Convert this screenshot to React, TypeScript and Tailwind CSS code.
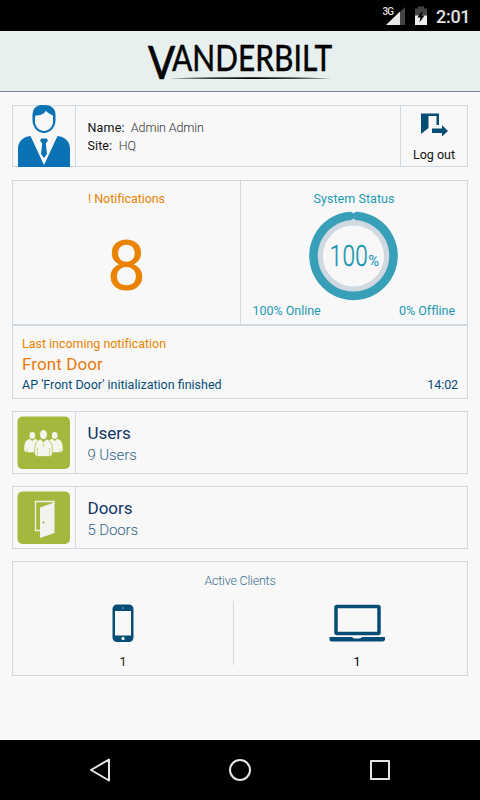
import React from "react";

const line = "border-[#d0d9e2]";

function Header() {
  return (
    <header className="flex h-[61px] justify-center border-b border-[#7683a0] bg-[#e8f0ef]">
      <svg className="overflow-visible" width="220" height="60" viewBox="130 31 220 60" fontFamily="Lato, sans-serif" fill="#050505">
        <text transform="translate(148 78.5) scale(.85 1)" fontSize="47" fontWeight="500" stroke="#050505" strokeWidth="0.6">V</text>
        <text transform="translate(172 71.2) scale(.82 1)" fontSize="36.5" fontWeight="500" stroke="#050505" strokeWidth="0.3" textLength="195.5">ANDERBILT</text>
        <path d="M169 78.2Q250 76.200 332 78.2Q250 79.8 169 78.2Z" />
      </svg>
    </header>
  );
}

function StatusBar() {
  return (
    <div className="flex h-[31px] items-start bg-black">
      <svg className="ml-[380px] shrink-0" width="52" height="31" viewBox="380 0 52 31">
        <text x="382.5" y="14.5" fill="#ddd" fontSize="10" fontWeight="500" fontFamily="Roboto, sans-serif" textLength="11.5">3G</text>
        <path d="M405 7V25H386Z" fill="#444" />
        <path d="M400 11.5V25H386Z" fill="#e8e8e8" />
        <path d="M415 8.5H418V6.5H424V8.5H427V16H415Z" fill="#444" />
        <path d="M415 15.5H427V25H415Z" fill="#eee" />
        <path d="M422.5 10.5L417.5 17.5H420.5L419.5 22.5L424.5 15.5H421.5Z" fill="#000" />
      </svg>
      <span className="mt-[5px] ml-[4px] text-[18px] leading-[24px] font-medium tracking-[-0.3px] text-[#e0e0e0]">2:01</span>
    </div>
  );
}

function Person() {
  return (
    <svg width="62" height="62" viewBox="13 105 62 62" fill="#0a72b5">
      <path d="M44 105C36 104.500 32 109 32.500 117V121C33 128 38 133 44 133S55 128 55.500 121V115C55.500 108 51 105 44 105Z" />
      <path d="M35 118C35 115 37 115.500 40 115C43 114.500 45 112.500 46 110.500C47 113.500 52 114 53 116V122C53 127 48 131 44 131S35 127 35 122Z" fill="#f8f8f8" />
      <path d="M18 167V149C18 141 23 137 30.500 136L44 165L57.500 136C65 137 70 141 70 149V167Z" />
      <path d="M41.300 138.500H46.700L48 140.500L45.800 143.500L47 154L44 158L41 154L42.200 143.500L40 140.500Z" />
    </svg>
  );
}

function Profile() {
  return (
    <section className={`flex h-[62px] border ${line}`}>
      <div className={`w-[63px] shrink-0 border-r ${line}`}>
        <div className="-mt-px flex"><Person /></div>
      </div>
      <div className="flex-1 pt-[13px] pl-[11.5px] text-[12.5px] leading-[18px] text-[#111]">
        <p><span className="tracking-[0.2px]">Name:</span><span className="ml-[6px] font-light tracking-[-0.1px] text-[#333]">Admin Admin</span></p>
        <p><span className="tracking-[0.1px]">Site:</span><span className="ml-[6.5px] font-light tracking-[-0.15px] text-[#333]">HQ</span></p>
      </div>
      <div className={`flex w-[67px] flex-col items-center border-l ${line}`}>
        <svg className="mt-[7px]" width="28" height="24" viewBox="420 113 28 24" fill="#064d76">
          <path d="M421 113.500H439V125H436.500V116H428.500V128L421 134Z" />
          <path d="M432 128.500H442V125L448 131L442 136.500V133H432Z" />
        </svg>
        <span className="mt-[9px] text-[12.5px] leading-[18px] text-[#111]">Log out</span>
      </div>
    </section>
  );
}

function Dashboard() {
  return (
    <section className={`mt-[13px] h-[219px] border ${line}`}>
      <div className={`flex h-[145px] border-b-2 ${line}`}>
        <div className={`flex w-[228px] flex-col items-center border-r ${line} text-[#e98300]`}>
          <h2 className="mt-[9px] text-[12.5px] leading-[18px] tracking-[-0.06px]">! Notifications</h2>
          <strong className="mt-[18px] text-[70px] leading-[80px] font-normal">8</strong>
        </div>
        <div className="flex flex-1 flex-col text-[#2298b3]">
          <h2 className="mt-[9px] text-center text-[12.5px] leading-[18px] tracking-[0.05px]">System Status</h2>
          <svg className="mx-auto mt-[2px]" width="92" height="92" viewBox="308 210 92 92" fontFamily="Roboto, sans-serif">
            <circle cx="353.500" cy="256" r="33.500" fill="none" stroke="#d0d9e1" strokeWidth="6" />
            <path d="M357 216A40 40 0 1 1 350 216" fill="none" stroke="#389fb8" strokeWidth="8.600" strokeLinecap="round" />
            <text transform="translate(329.5 266) scale(.752 1)" fontSize="30" fontWeight="300" fill="#1595b0" stroke="#1595b0" strokeWidth=".4" textLength="51">100</text>
            <text transform="translate(368.500 266) scale(1.08 1)" fontSize="14" fontWeight="300" fill="#1595b0" stroke="#1595b0" strokeWidth=".3" textLength="9.700" lengthAdjust="spacingAndGlyphs">%</text>
          </svg>
          <div className="flex justify-between pr-[12px] pl-[11.5px] text-[12.5px] leading-[18px] tracking-[-0.02px]"><span>100% Online</span><span>0% Offline</span></div>
        </div>
      </div>
      <div className="px-[9px] pt-[9px] text-[12.5px] leading-[18px]">
        <p className="tracking-[-0.03px] text-[#e98300]">Last incoming notification</p>
        <p className="text-[17px] leading-[23px] tracking-[0.1px] text-[#e9780c]">Front Door</p>
        <p className="flex justify-between text-[#064d76]"><span>AP 'Front Door' initialization finished</span><span className="tracking-[-0.1px]">14:02</span></p>
      </div>
    </section>
  );
}

function PersonShape() {
  return (
    <>
      <ellipse cx="0" cy="4.500" rx="3.200" ry="4.500" />
      <path d="M-3 9L0 12L3 9C8 11 9 15 9 24L7 26.500H-7L-9 24C-9 15-8 11-3 9Z" />
    </>
  );
}

function UsersIcon() {
  return (
    <svg width="53" height="53" viewBox="17 416 53 53" fill="#f4f5ec">
      <rect x="17.5" y="416.500" width="52.500" height="52.500" rx="5" fill="#a3b83c" />
      <g transform="translate(32.300 432) scale(.9 .76)"><PersonShape /></g>
      <g transform="translate(54.700 432) scale(.9 .76)"><PersonShape /></g>
      <g transform="translate(43.500 430)" stroke="#a3b83c" strokeWidth=".7"><PersonShape /></g>
      <ellipse cx="43.500" cy="434.400" rx="3.300" ry="4.500" />
      <path d="M43.500 442L42.700 444L43.500 449L44.300 444Z" fill="#d3dba7" />
      <path d="M37.500 448V456M49.500 448V456M27 449V456M60 449V456" stroke="#a3b83c" strokeWidth=".5" />
    </svg>
  );
}

function DoorsIcon() {
  return (
    <svg width="53" height="53" viewBox="17 491 53 53" fill="#f2f3ef">
      <rect x="17.5" y="491.500" width="52.500" height="52.500" rx="5" fill="#a3b83c" />
      <path d="M40.500 530.500H35.500V501.500H54V504" fill="none" stroke="#f2f3ef" strokeWidth="1.300" />
      <path d="M40 507.500L54.500 502.500V533L40 538Z" />
      <circle cx="43.500" cy="522.500" r=".9" fill="#8d9f3a" />
    </svg>
  );
}

function LinkCard({ icon, title, count }: { icon: React.ReactNode; title: string; count: string }) {
  return (
    <section className={`flex h-[63px] border ${line}`}>
      <div className={`w-[63px] border-r ${line} pt-[4px] pl-[4px]`}>{icon}</div>
      <div className="pt-[10px] pl-[11.5px]">
        <h2 className="text-[17px] leading-[22px] text-[#103668]">{title}</h2>
        <p className="text-[15px] leading-[22px] font-light tracking-[-0.1px] text-[#2f6686]">{count}</p>
      </div>
    </section>
  );
}

function Clients() {
  return (
    <section className={`mt-[12px] h-[115px] border ${line}`}>
      <h2 className="pt-[10px] text-center text-[12.5px] leading-[18px] font-light tracking-[-0.2px] text-[#386f8a]">Active Clients</h2>
      <div className="mt-[11px] flex h-[64px] text-[12.5px] leading-[18px] text-[#222]">
        <div className={`flex w-[221px] flex-col items-center border-r ${line}`}>
          <svg className="mt-[3px] shrink-0" width="22" height="38" viewBox="112 604 22 38">
            <rect x="112.500" y="604.500" width="21" height="37.500" rx="4.500" fill="#064d76" />
            <rect x="115" y="611" width="16" height="24.500" fill="#f8f8f8" />
            <circle cx="123" cy="608" r=".8" fill="#a0bbca" />
            <rect x="121.500" y="637" width="3" height="3" rx="1" fill="#f8f8f8" />
          </svg>
          <span className="mt-[11px]">1</span>
        </div>
        <div className="flex flex-1 flex-col items-center pl-[13px] text-black">
          <svg className="mt-[3px] shrink-0" width="56" height="38" viewBox="329 604 56 38" fill="#064d76">
            <rect x="336" y="606.500" width="43" height="27" fill="none" stroke="#064d76" strokeWidth="3.500" rx="1" />
            <path d="M329.500 637H352Q353 638.500 357 638.500T362 637H385V640Q384 641.500 382 641.500H332Q330 641.500 329.500 640Z" />
          </svg>
          <span className="mt-[11px]">1</span>
        </div>
      </div>
    </section>
  );
}

function NavBar() {
  return (
    <nav className="flex h-[60px] items-center justify-center gap-[116px] bg-black">
      <svg width="24" height="24" fill="none" stroke="#e5e5e5" strokeWidth="2" strokeLinejoin="round"><path d="M21 1.500V22.500L3 12Z" /></svg>
      <svg width="24" height="24" fill="none" stroke="#e5e5e5" strokeWidth="2"><circle cx="12" cy="12" r="10" /></svg>
      <svg width="24" height="24" fill="none" stroke="#e5e5e5" strokeWidth="2" strokeLinejoin="round"><rect x="3" y="3" width="18" height="18" /></svg>
    </nav>
  );
}

export default function App() {
  return (
    <div className="flex h-[800px] w-[480px] flex-col overflow-hidden bg-[#f8f8f8] font-['Roboto',sans-serif]">
      <StatusBar />
      <Header />
      <main className="flex-1 pt-[13px] pr-[12px] pl-[12px]">
        <Profile />
        <Dashboard />
        <div className="mt-[12px] flex flex-col gap-[12px]">
          <LinkCard icon={<UsersIcon />} title="Users" count="9 Users" />
          <LinkCard icon={<DoorsIcon />} title="Doors" count="5 Doors" />
        </div>
        <Clients />
      </main>
      <NavBar />
    </div>
  );
}
